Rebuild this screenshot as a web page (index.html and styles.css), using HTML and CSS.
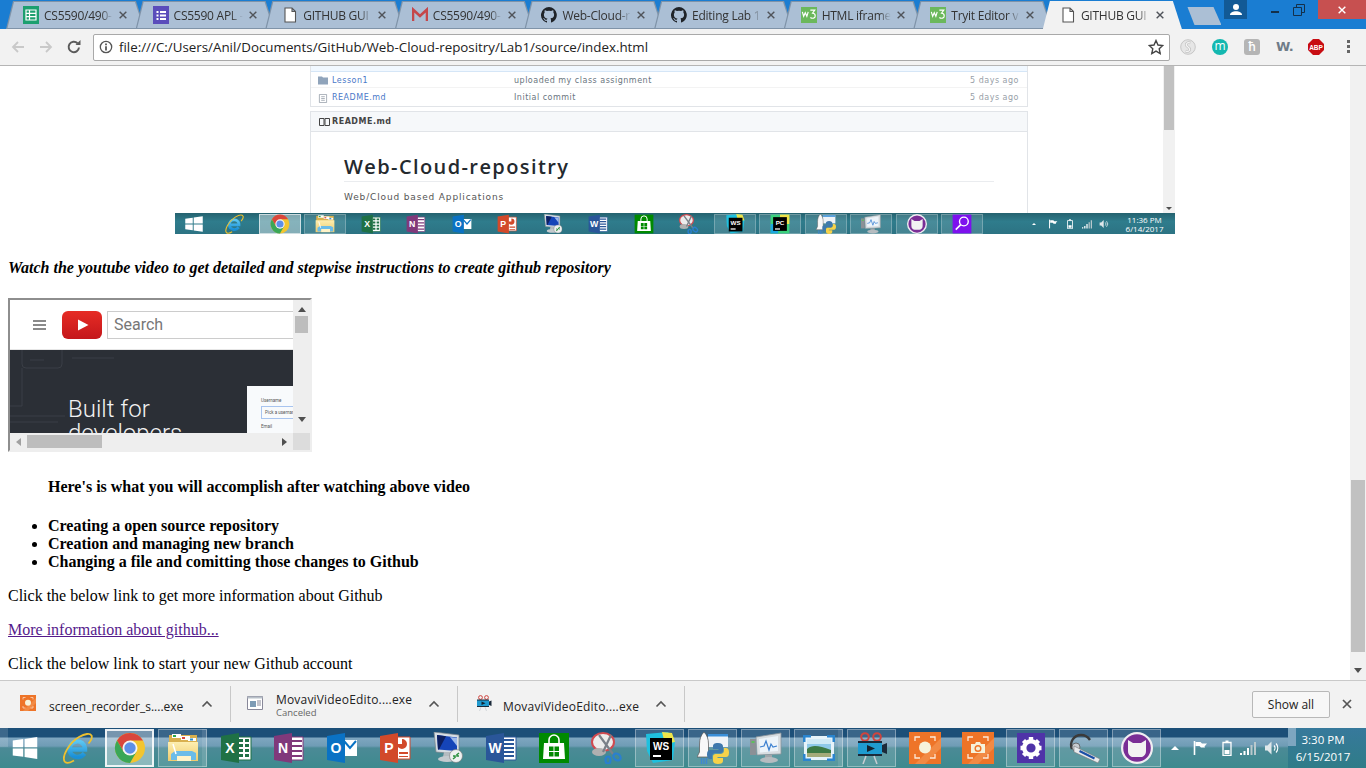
FILE: index.html
```html
<!DOCTYPE html>
<html lang="en">
<head>
<meta charset="utf-8">
<title>GITHUB GUIDE</title>
<link rel="stylesheet" href="styles.css">
</head>
<body>
<svg class="defs" width="0" height="0" aria-hidden="true">
  <defs>
    <linearGradient id="ieg" x1="0" y1="0" x2="0" y2="1"><stop offset="0" stop-color="#5cc6f2"/><stop offset="1" stop-color="#1a8fd6"/></linearGradient>
    <linearGradient id="fdg" x1="0" y1="0" x2="0" y2="1"><stop offset="0" stop-color="#fdeeb0"/><stop offset="1" stop-color="#efcb6c"/></linearGradient>
    <symbol id="x" viewBox="0 0 12 12"><path d="M2 2l8 8M10 2l-8 8" stroke="currentColor" stroke-width="1.700" fill="none"/></symbol>
    <symbol id="doc" viewBox="0 0 16 16"><path d="M3 1h7l3.500 3.500V15H3z M10 1v3.500h3.500" fill="#fff" stroke="currentColor" stroke-width="1.100"/></symbol>
    <symbol id="sheets" viewBox="0 0 16 20"><path d="M0 1h16v18H0z" fill="#1c9f6f"/><path d="M3 5h10v10H3zM3 8.300h10M3 11.600h10M6.500 5v10" fill="none" stroke="#fff" stroke-width="1.200"/></symbol>
    <symbol id="forms" viewBox="0 0 16 20"><path d="M0 1h16v18H0z" fill="#5a4dbb"/><path d="M3.500 6h2v2h-2zM3.500 9.500h2v2h-2zM3.500 13h2v2h-2zM7 6h6v2H7zM7 9.500h6v2H7zM7 13h6v2H7z" fill="#fff"/></symbol>
    <symbol id="gmail" viewBox="0 0 16 16"><path d="M1 14V2.500L8 9l7-6.500V14" fill="none" stroke="#c5474b" stroke-width="2.600"/></symbol>
    <symbol id="gh" viewBox="0 0 16 16"><path d="M8 0a8 8 0 0 0-2.500 15.600c.4.100.5-.2.500-.4v-1.400c-2.200.5-2.700-1-2.700-1-.4-.9-.9-1.200-.9-1.200-.7-.5.100-.5.100-.5.800.100 1.200.8 1.200.8.700 1.200 1.900.9 2.300.7.100-.5.300-.9.500-1.100-1.800-.2-3.600-.9-3.600-4 0-.9.300-1.600.8-2.100-.1-.2-.4-1 .1-2.100 0 0 .7-.2 2.200.8a7.600 7.600 0 0 1 4 0c1.500-1 2.200-.8 2.200-.8.500 1.100.2 1.900.1 2.100.5.600.8 1.300.8 2.100 0 3.100-1.900 3.700-3.700 3.900.3.300.6.700.6 1.500v2.200c0 .2.100.5.600.4A8 8 0 0 0 8 0z" fill="#1f2328"/></symbol>
    <symbol id="w3" viewBox="0 0 18 18"><path d="M0 0h18v18H0z" fill="#6bb85c"/><path d="M1.500 5.500l1.500 5 1.800-4 1.800 4 1.500-5M10.500 3.500h5l-2.500 3.500c2.200 0 3 1.200 3 3 0 2.500-3 3.500-5.500 1.800" fill="none" stroke="#fff" stroke-width="1.300"/></symbol>

    <symbol id="t-win" viewBox="0 0 32 32"><path d="M2 7.500l12-1.700v9.400H2zM15.500 5.600L30 3.500v11.700H15.500zM2 16.700h12v9.400L2 24.500zM15.500 16.700H30v11.800l-14.500-2.200z" fill="#fff"/></symbol>
    <symbol id="t-ie" viewBox="0 0 32 32"><path d="M24 17.500H8.500a7.800 7.800 0 0 1 15.500-1.500zM8.500 17.500c.5 7.500 10 10 15 4" fill="none" stroke="url(#ieg)" stroke-width="4.400"/><path d="M4 30C0 25 8 11 18 5c6-3.500 11-4 12.500-1.500 1 2-.5 5-3 8M4 30c2 1.500 5 1 9-1.500" fill="none" stroke="#eec02e" stroke-width="1.800"/></symbol>
    <symbol id="t-chrome" viewBox="0 0 32 32"><circle cx="16" cy="16" r="15" fill="#f2c52f"/><path d="M3 8.500A15 15 0 0 1 29 8.500H16L9.500 19.750z" fill="#d9463c"/><path d="M3 8.500L9.500 19.750H22.500L16 31A15 15 0 0 1 3 8.500z" fill="#3aa757"/><circle cx="16" cy="16" r="7.500" fill="#f4f4f4"/><circle cx="16" cy="16" r="5.700" fill="#5d8fe8"/></symbol>
    <symbol id="t-folder" viewBox="0 0 32 32"><path d="M2 3h28v25H2z" fill="#d9b04e"/><path d="M5 2h9v4H5z" fill="#fff"/><path d="M6 3h3v2H6z" fill="#2aa84a"/><path d="M14 4h9v4h-9z" fill="#fff"/><path d="M15 5h3v2h-3z" fill="#d9463c"/><path d="M21 6h8v3h-8z" fill="#fff"/><path d="M23 6.500h3v2h-3z" fill="#2a8fd0"/><path d="M1 10h30v19H1z" fill="url(#fdg)"/><path d="M8 19h17l4 2v7H24v-4H10v4H4v-6z" fill="#6bbce8"/><path d="M10 24h14v5H10z" fill="#fff3c8"/><path d="M6 12l3 10" stroke="#fff" stroke-width="1.500"/></symbol>
    <symbol id="t-xl" viewBox="0 0 32 32"><path d="M17 5h14v23H17z" fill="#fff" stroke="#1f7145"/><path d="M19 7h4v3h-4zM25 7h4v3h-4zM19 12h4v3h-4zM25 12h4v3h-4zM19 17h4v3h-4zM25 17h4v3h-4zM19 22h4v3h-4zM25 22h4v3h-4z" fill="#1f7145"/><path d="M1 4l18-3v30L1 28z" fill="#1f7145"/><text x="10" y="21" class="glyph">X</text></symbol>
    <symbol id="t-on" viewBox="0 0 32 32"><path d="M17 5h13v23H17z" fill="#fff" stroke="#80397b"/><path d="M19 9h10M19 14h10M19 19h10M19 24h10" stroke="#80397b" stroke-width="2"/><path d="M1 4l18-3v30L1 28z" fill="#80397b"/><text x="10" y="21" class="glyph">N</text></symbol>
    <symbol id="t-ol" viewBox="0 0 32 32"><path d="M17 8h14v16H17z" fill="#fff"/><path d="M18 9l6 7 6-7" fill="none" stroke="#0a72c4" stroke-width="2"/><path d="M1 4l18-3v30L1 28z" fill="#0a72c4"/><text x="10" y="21" class="glyph">O</text></symbol>
    <symbol id="t-pp" viewBox="0 0 32 32"><path d="M17 5h14v22H17z" fill="#fff" stroke="#d2492a"/><path d="M23 7a5 5 0 1 1-5 5h5z" fill="#d2492a"/><path d="M20 20h9v2h-9zM20 24h9v1h-9z" fill="#d2492a"/><path d="M1 4l18-3v30L1 28z" fill="#d2492a"/><text x="10" y="21" class="glyph">P</text></symbol>
    <symbol id="t-rd" viewBox="0 0 32 32"><path d="M2 0l25 3v19L4 20z" fill="#d6dde3" stroke="#7a8288" stroke-width=".7"/><path d="M5 3l20 2.500V19L6 17.500z" fill="#1544b8"/><path d="M5 3l9 1.200L7 17.500H6z" fill="#0d1f60"/><path d="M18 5l7 1v8z" fill="#9db9ea"/><path d="M12 20h8l1 5H11z" fill="#b4bbc0"/><ellipse cx="15" cy="27" rx="9" ry="3" fill="#c4cace"/><circle cx="24" cy="24" r="6.500" fill="#eef0f0" stroke="#777" stroke-width=".6"/><path d="M21 27l2.500-2M24.500 23l2.500-2M21 24h2v2M27 24h-2v-2" fill="none" stroke="#2a8f3d" stroke-width="1.500"/></symbol>
    <symbol id="t-wd" viewBox="0 0 32 32"><path d="M17 5h14v23H17z" fill="#fff" stroke="#2a5699"/><path d="M19 8h10M19 12h10M19 16h10M19 20h10M19 24h10" stroke="#2a5699" stroke-width="2"/><path d="M1 4l18-3v30L1 28z" fill="#2a5699"/><text x="10" y="21" class="glyph">W</text></symbol>
    <symbol id="t-store" viewBox="0 0 32 32"><path d="M1 1h30v30H1z" fill="#008a00"/><path d="M6 11h20l1 16H5z" fill="#fff"/><path d="M11 12V8a5 5 0 0 1 10 0v4" fill="none" stroke="#fff" stroke-width="1.600"/><path d="M11 14.500h4.500V19H11zM16.500 14.500H21V19h-4.500zM11 20h4.500v4.500H11zM16.500 20H21v4.500h-4.500z" fill="#008a00"/></symbol>
    <symbol id="t-snip" viewBox="0 0 32 32"><ellipse cx="12" cy="10" rx="11" ry="9" fill="#ececec" stroke="#d04a50" stroke-width="2"/><ellipse cx="8" cy="20" rx="7" ry="4" fill="#b0b0b0"/><path d="M8 3l14 19M20 3L12 20" stroke="#7a8088" stroke-width="2.200"/><ellipse cx="26" cy="25" rx="4" ry="3" fill="none" stroke="#2a7fd0" stroke-width="2.200" transform="rotate(40 26 25)"/><ellipse cx="17" cy="28" rx="2.500" ry="3.500" fill="none" stroke="#2a7fd0" stroke-width="2.200"/></symbol>
    <symbol id="t-ws" viewBox="0 0 32 32"><path d="M2 2l22-2 7 10-2 18-20 3-6-12z" fill="#1fc0de"/><path d="M18 0l10 1 3 9-10 2z" fill="#eee54a"/><path d="M6 6h22v22H6z" fill="#000"/><text x="17" y="18" class="jb">WS</text><path d="M9 23h8v2H9z" fill="#fff"/></symbol>
    <symbol id="t-pc" viewBox="0 0 32 32"><path d="M1 1h30v30H1z" fill="#3bd17c"/><path d="M16 1h15v15H16z" fill="#f1e24a"/><path d="M1 16h12v15H1z" fill="#1ca8e0"/><path d="M5 5h22v22H5z" fill="#000"/><text x="16" y="17" class="jb">PC</text><path d="M8 23h8v2H8z" fill="#fff"/></symbol>
    <symbol id="t-rocket" viewBox="0 0 32 32"><path d="M11 2h20v13H11z" fill="#eef3f7"/><path d="M11 2h20v2.500H11z" fill="#3a8fd8"/><path d="M7 0c3 3 4.500 7 4.500 12v8l2.500 5H0l2.500-5v-8C2.500 7 4 3 7 0z" fill="#f8f8f8" stroke="#555" stroke-width=".7"/><path d="M4.500 26v6M7 26v6M9.500 26v6" stroke="#3f86d2" stroke-width="1.400"/><path d="M21 11c-4 0-5 1.500-5 3.500V17h5.500v1H13c-2 0-3 1.500-3 4.500s1 4.500 3 4.500h2v-2.500c0-2 1.500-3.500 3.500-3.500h5c1.500 0 2.500-1 2.500-2.500v-4c0-2-1.500-3.500-5-3.500z" fill="#3f79ad"/><path d="M21 11c-4 0-5 1.500-5 3.500V17h5.500v1H13c-2 0-3 1.500-3 4.500s1 4.500 3 4.500h2v-2.500c0-2 1.500-3.500 3.500-3.500h5c1.500 0 2.500-1 2.500-2.500v-4c0-2-1.500-3.500-5-3.500z" fill="#f6d24a" transform="rotate(180 21 21.500)"/></symbol>
    <symbol id="t-mon" viewBox="0 0 32 32"><path d="M6 5l25-4v21L7 23z" fill="#d8dde1" stroke="#8c949a" stroke-width=".8"/><path d="M9 7l19-3v15L10 20.500z" fill="#edf4fa"/><path d="M10 15l4-1 2-5 3 9 2-6 2 3 4-1" fill="none" stroke="#3a7fd0" stroke-width="1.200"/><path d="M0 7h6v16H0z" fill="#8b9096"/><path d="M1.500 9h3v2h-3z" fill="#5cbf5c"/><path d="M15 23h7v3h-7z" fill="#a0a6ab"/><ellipse cx="19" cy="28" rx="9" ry="3" fill="#b6bcc0"/></symbol>
    <symbol id="t-photo" viewBox="0 0 32 32"><path d="M1 4h30v24H1z" fill="#e6f3fa"/><path d="M4 7h24v18H4z" fill="#8fc9ea"/><path d="M4 7h24v5H4z" fill="#cfe9f7"/><path d="M4 17c6-5 12-3 24 1v7H4z" fill="#3d7a46"/><path d="M4 21h24v4H4z" fill="#a4ab7a"/><path d="M0 3h8v2.500H2.500V10H0zM32 3h-8v2.500h5.500V10H32zM0 29h8v-2.500H2.500V22H0zM32 29h-8v-2.500h5.500V22H32z" fill="#2a85cf"/></symbol>
    <symbol id="t-movavi" viewBox="0 0 32 32"><circle cx="9" cy="5" r="3.800" fill="none" stroke="#d0443e" stroke-width="2"/><circle cx="21" cy="5" r="3.800" fill="none" stroke="#d0443e" stroke-width="2"/><path d="M2 9h24v15H2z" fill="#1b2a3a"/><path d="M2 11h24v11H2z" fill="#1f9bd0"/><path d="M11 13l8 3.500-8 3.500z" fill="#14222f"/><path d="M26 13l5-2v11l-5-2z" fill="#1b2a3a"/><path d="M10 24L7 32M18 24l3 8" stroke="#c8cdd2" stroke-width="1.500"/></symbol>
    <symbol id="t-rec" viewBox="0 0 32 32"><path d="M0 0h32v32H0z" fill="#ee7428"/><path d="M32 6L6 32h10L32 16z" fill="#f28a44"/><circle cx="16" cy="15.500" r="6" fill="#f6f2da"/><path d="M6 9V5h5M26 9V5h-5M6 22v4h5M26 22v4h-5" fill="none" stroke="#fde9d8" stroke-width="1.300"/></symbol>
    <symbol id="t-cam" viewBox="0 0 32 32"><path d="M0 0h32v32H0z" fill="#ee7428"/><path d="M32 6L6 32h10L32 16z" fill="#f28a44"/><path d="M9 12h4l1-2h4l1 2h4v9H9z" fill="#f6f2da"/><circle cx="16" cy="16.500" r="2.800" fill="none" stroke="#ee7428" stroke-width="1.400"/><path d="M6 9V5h5M26 9V5h-5M6 22v4h5M26 22v4h-5" fill="none" stroke="#fde9d8" stroke-width="1.300"/></symbol>
    <symbol id="t-gear" viewBox="0 0 32 32"><path d="M2 1h28v30H2z" fill="#4f33a8"/><circle cx="16" cy="16" r="6.800" fill="none" stroke="#fff" stroke-width="4.400"/><path d="M16 5v4M16 23v4M5.500 16h4M22.500 16h4M8.500 8.500l3 3M20.500 20.500l3 3M23.500 8.500l-3 3M11.500 20.500l-3 3" stroke="#fff" stroke-width="4.400"/></symbol>
    <symbol id="t-head" viewBox="0 0 32 32"><path d="M4 17C1 10 6 3 13 3c4 0 7 2 9 5" fill="none" stroke="#3a3a3a" stroke-width="2.400"/><circle cx="8" cy="15" r="4" fill="#c8ccd0" stroke="#555" stroke-width=".8"/><path d="M6 14l26 13-2 4L6 20z" fill="#e8eaec" stroke="#777" stroke-width=".6"/><path d="M12 18l15 7.500-1 2-15-7.500z" fill="#1a4ea6"/></symbol>
    <symbol id="t-cat" viewBox="0 0 32 32"><circle cx="16" cy="16" r="16" fill="#f0eef2"/><circle cx="16" cy="16" r="13.800" fill="#7a2e96"/><path d="M7 8l5 3h8l5-3v11c0 4-3 6-5 6h-8c-2 0-5-2-5-6z" fill="#f2f2f2"/></symbol>
    <symbol id="t-mag" viewBox="0 0 32 32"><path d="M1 1h30v30H1z" fill="#7d10ee"/><circle cx="19" cy="12" r="7" fill="none" stroke="#fff" stroke-width="2.200"/><path d="M14 17l-8 8" stroke="#fff" stroke-width="2.600"/></symbol>

    <symbol id="tr-flag" viewBox="0 0 16 16"><path d="M2.500 1v14" stroke="#fff" stroke-width="1.600"/><path d="M3.500 2h5l1.500 1.500h5l-2.500 3 .5 1H9L7.500 6H3.500z" fill="#fff"/></symbol>
    <symbol id="tr-batt" viewBox="0 0 16 16"><path d="M4 2.500h8v13H4z" fill="none" stroke="#fff" stroke-width="1.300"/><path d="M6.500 .5h3v2h-3zM5.500 10h5v4h-5z" fill="#fff"/></symbol>
    <symbol id="tr-sig" viewBox="0 0 16 16"><path d="M0 13h2v2H0zM3.500 11h2v4h-2zM7 8h2v7H7z" fill="#fff"/><path d="M10.500 5h2v10h-2zM14 2h2v13h-2z" fill="#b9c8cc"/></symbol>
    <symbol id="tr-vol" viewBox="0 0 16 16"><path d="M1 5.500h2.500L7.500 1.500v13L3.500 10.500H1z" fill="#dfe7ea"/><path d="M10 5.500a3.500 3.500 0 0 1 0 5M12 3.500a6.500 6.500 0 0 1 0 9" fill="none" stroke="#fff" stroke-width="1.100"/></symbol>
  </defs>
</svg>

<div class="browser">
  <header class="tabbar">
    <div class="tabs">
      <div class="tab"><svg class="tab-ico tab-ico-tall"><use href="#sheets"/></svg><span class="tab-title">CS5590/490-</span><svg class="tab-x"><use href="#x"/></svg></div>
      <div class="tab"><svg class="tab-ico tab-ico-tall"><use href="#forms"/></svg><span class="tab-title">CS5590 APL -</span><svg class="tab-x"><use href="#x"/></svg></div>
      <div class="tab"><svg class="tab-ico tab-ico-doc"><use href="#doc"/></svg><span class="tab-title">GITHUB GUI</span><svg class="tab-x"><use href="#x"/></svg></div>
      <div class="tab"><svg class="tab-ico"><use href="#gmail"/></svg><span class="tab-title">CS5590/490-</span><svg class="tab-x"><use href="#x"/></svg></div>
      <div class="tab"><svg class="tab-ico"><use href="#gh"/></svg><span class="tab-title">Web-Cloud-r</span><svg class="tab-x"><use href="#x"/></svg></div>
      <div class="tab"><svg class="tab-ico"><use href="#gh"/></svg><span class="tab-title">Editing Lab 1</span><svg class="tab-x"><use href="#x"/></svg></div>
      <div class="tab"><svg class="tab-ico"><use href="#w3"/></svg><span class="tab-title">HTML iframe</span><svg class="tab-x"><use href="#x"/></svg></div>
      <div class="tab"><svg class="tab-ico"><use href="#w3"/></svg><span class="tab-title">Tryit Editor v</span><svg class="tab-x"><use href="#x"/></svg></div>
      <div class="tab tab-active"><svg class="tab-ico tab-ico-doc"><use href="#doc"/></svg><span class="tab-title">GITHUB GUI</span><svg class="tab-x"><use href="#x"/></svg></div>
      <div class="newtab"></div>
    </div>
    <div class="winctl">
      <div class="win-user"><svg viewBox="0 0 14 14" width="14" height="14"><circle cx="7" cy="4" r="3" fill="#fff"/><path d="M1 12c0-5 12-5 12 0z" fill="#fff"/></svg></div>
      <div class="win-min"><span class="min-bar"></span></div>
      <div class="win-max"><svg viewBox="0 0 12 12" width="12" height="12"><path d="M3.500 3V.5h8v8H9M.5 3.500h8v8h-8z" fill="none" stroke="#14304a"/></svg></div>
      <div class="win-close"><svg width="10" height="10"><use href="#x"/></svg></div>
    </div>
  </header>

  <nav class="toolbar">
    <div class="navbtns">
      <svg class="nav-ico nav-off" viewBox="0 0 16 16"><path d="M14 8H3M8 3L3 8l5 5" fill="none" stroke="currentColor" stroke-width="1.800"/></svg>
      <svg class="nav-ico nav-off" viewBox="0 0 16 16"><path d="M2 8h11M8 3l5 5-5 5" fill="none" stroke="currentColor" stroke-width="1.800"/></svg>
      <svg class="nav-ico" viewBox="0 0 16 16"><path d="M13 8.500A5.200 5.200 0 1 1 11.500 4.300" fill="none" stroke="currentColor" stroke-width="2"/><path d="M9.500 6h5V1z" fill="currentColor"/></svg>
    </div>
    <div class="omnibox">
      <svg class="info" viewBox="0 0 16 16"><circle cx="8" cy="8" r="6.500" fill="none" stroke="#555" stroke-width="1.500"/><path d="M7 7h2v5H7zM7 4h2v2H7z" fill="#555"/></svg>
      <span class="url">file:///C:/Users/Anil/Documents/GitHub/Web-Cloud-repositry/Lab1/source/index.html</span>
      <svg class="star" viewBox="0 0 16 16"><path d="M8 1.500l2 4.500 4.800.5-3.600 3.200 1 4.800L8 12.100l-4.200 2.400 1-4.800L1.200 6.500 6 6z" fill="none" stroke="#444" stroke-width="1.400"/></svg>
    </div>
    <div class="exts">
      <svg class="ext" viewBox="0 0 16 16"><circle cx="8" cy="8" r="7.300" fill="#e6e6e6" stroke="#c6c6c6"/><path d="M10.500 4C7 2.500 4.500 5.500 8 8s1 5.500-2.500 4" fill="none" stroke="#c2c2c2" stroke-width="2.600"/><path d="M10.500 4C7 2.500 4.500 5.500 8 8s1 5.500-2.500 4" fill="none" stroke="#f4f4f4" stroke-width="1.200"/></svg>
      <span class="ext ext-m">m</span>
      <span class="ext ext-h">ħ</span>
      <span class="ext ext-w">W.</span>
      <svg class="ext" viewBox="0 0 16 16"><path d="M5 0h6l5 5v6l-5 5H5l-5-5V5z" fill="#c80d12"/><text x="8" y="10.500" class="abp">ABP</text></svg>
      <span class="ext ext-menu"><i></i><i></i><i></i></span>
    </div>
  </nav>

  <main class="viewport">
    <div class="page">
      <figure class="shot">
        <div class="shot-view">
          <div class="shot-page">
            <div class="repo-files">
              <div class="repo-band"></div>
              <div class="repo-row">
                <svg class="repo-ico" viewBox="0 0 10 8"><path d="M0 0h4l1 1h5v7H0z" fill="#90a4bb"/></svg>
                <span class="repo-name">Lesson1</span><span class="repo-msg">uploaded my class assignment</span><span class="repo-age">5 days ago</span>
              </div>
              <div class="repo-row repo-row-last">
                <svg class="repo-ico" viewBox="0 0 10 10"><path d="M1 .5h8v9H1zM3 3h4M3 5h4M3 7h4" fill="none" stroke="#8b95a0" stroke-width=".8"/></svg>
                <span class="repo-name">README.md</span><span class="repo-msg">Initial commit</span><span class="repo-age">5 days ago</span>
              </div>
            </div>
            <div class="readme">
              <div class="readme-head">
                <svg class="readme-ico" viewBox="0 0 11 8"><path d="M.5.500h4.500v7H.5zM6 .500h4.500v7H6z" fill="none" stroke="#444"/></svg>
                <strong>README.md</strong>
              </div>
              <div class="readme-body">
                <h1 class="readme-title">Web-Cloud-repositry</h1>
                <p class="readme-text">Web/Cloud based Applications</p>
              </div>
            </div>
          </div>
          <div class="shot-scroll"><span class="shot-thumb"></span><span class="shot-down"></span></div>
        </div>
        <div class="mini-task">
          <div class="mt-start"><svg class="mt-ico"><use href="#t-win"/></svg></div>
          <div class="mt-item"><svg class="mt-ico"><use href="#t-ie"/></svg></div>
          <div class="mt-item mt-on"><svg class="mt-ico"><use href="#t-chrome"/></svg></div>
          <div class="mt-item mt-box"><svg class="mt-ico"><use href="#t-folder"/></svg></div>
          <div class="mt-item"><svg class="mt-ico"><use href="#t-xl"/></svg></div>
          <div class="mt-item"><svg class="mt-ico"><use href="#t-on"/></svg></div>
          <div class="mt-item"><svg class="mt-ico"><use href="#t-ol"/></svg></div>
          <div class="mt-item"><svg class="mt-ico"><use href="#t-pp"/></svg></div>
          <div class="mt-item"><svg class="mt-ico"><use href="#t-rd"/></svg></div>
          <div class="mt-item"><svg class="mt-ico"><use href="#t-wd"/></svg></div>
          <div class="mt-item"><svg class="mt-ico"><use href="#t-store"/></svg></div>
          <div class="mt-item"><svg class="mt-ico"><use href="#t-snip"/></svg></div>
          <div class="mt-item mt-box"><svg class="mt-ico"><use href="#t-ws"/></svg></div>
          <div class="mt-item mt-box"><svg class="mt-ico"><use href="#t-pc"/></svg></div>
          <div class="mt-item mt-box"><svg class="mt-ico"><use href="#t-rocket"/></svg></div>
          <div class="mt-item mt-box"><svg class="mt-ico"><use href="#t-mon"/></svg></div>
          <div class="mt-item mt-box"><svg class="mt-ico"><use href="#t-cat"/></svg></div>
          <div class="mt-item mt-box"><svg class="mt-ico"><use href="#t-mag"/></svg></div>
          <div class="mt-tray">
            <span class="tray-up tray-up-s"></span>
            <svg class="mt-tr"><use href="#tr-flag"/></svg>
            <svg class="mt-tr"><use href="#tr-batt"/></svg>
            <svg class="mt-tr"><use href="#tr-sig"/></svg>
            <svg class="mt-tr"><use href="#tr-vol"/></svg>
            <div class="mt-clock"><span>11:36 PM</span><span>6/14/2017</span></div>
          </div>
        </div>
      </figure>

      <p class="lead"><b><i>Watch the youtube video to get detailed and stepwise instructions to create github repository</i></b></p>

      <div class="frame">
        <div class="frame-main">
          <div class="yt-head">
            <span class="yt-burger"><i></i><i></i><i></i></span>
            <svg class="yt-logo" viewBox="0 0 40 28"><defs><linearGradient id="ytg" x1="0" y1="0" x2="0" y2="1"><stop offset="0" stop-color="#e62c25"/><stop offset="1" stop-color="#c4171b"/></linearGradient></defs><rect width="40" height="28" rx="6" fill="url(#ytg)"/><path d="M16 8.500l10.500 5.500L16 19.500z" fill="#fff"/></svg>
            <span class="yt-search">Search</span>
          </div>
          <div class="yt-hero">
            <svg class="yt-lines" viewBox="0 0 140 80"><path d="M12 0v14a4 4 0 0 0 4 4h32a4 4 0 0 0 4-4V0M12 18v38H0M20 10h14M62 8h42M0 66h55M0 72h48" fill="none" stroke="#3a3e46" stroke-width="1"/></svg>
            <div class="yt-copy">Built for<br>developers</div>
            <div class="yt-card">
              <span class="yt-label">Username</span>
              <span class="yt-input">Pick a username</span>
              <span class="yt-label">Email</span>
            </div>
          </div>
        </div>
        <div class="vbar"><span class="arr arr-up"></span><span class="vthumb"></span><span class="arr arr-down"></span></div>
        <div class="hbar"><span class="arr arr-left"></span><span class="hthumb"></span><span class="arr arr-right"></span></div>
        <div class="corner"></div>
      </div>

      <p class="accomplish"><b>Here's is what you will accomplish after watching above video</b></p>
      <ul class="list">
        <li>Creating a open source repository</li>
        <li>Creation and managing new branch</li>
        <li>Changing a file and comitting those changes to Github</li>
      </ul>
      <p class="para">Click the below link to get more information about Github</p>
      <p class="para"><a class="visited" href="#">More information about github...</a></p>
      <p class="para">Click the below link to start your new Github account</p>
    </div>
    <div class="pagebar">
      <span class="pb-track"><span class="pb-thumb"></span></span>
      <span class="arr arr-down pb-down"></span>
    </div>
  </main>

  <section class="downloads">
    <div class="dl dl-1">
      <svg class="dl-ico"><use href="#t-rec"/></svg>
      <div class="dl-text"><span>screen_recorder_s....exe</span></div>
      <svg class="chev" viewBox="0 0 12 8"><path d="M1.500 6.500L6 2l4.500 4.500" fill="none" stroke="#555" stroke-width="1.600"/></svg>
    </div>
    <div class="dl dl-2">
      <svg class="dl-ico" viewBox="0 0 16 16"><path d="M.5 1.500h15v13H.5z" fill="#fff" stroke="#889"/><path d="M.5 1.500h15v2H.5z" fill="#b8c0c8"/><path d="M3 6h6v6H3z" fill="#7d9bb5"/><path d="M10 6h4M10 8h4M10 10h4" stroke="#889"/></svg>
      <div class="dl-text"><span class="dl-wide">MovaviVideoEdito....exe</span><small>Canceled</small></div>
      <svg class="chev" viewBox="0 0 12 8"><path d="M1.500 6.500L6 2l4.500 4.500" fill="none" stroke="#555" stroke-width="1.600"/></svg>
    </div>
    <div class="dl dl-3">
      <svg class="dl-ico"><use href="#t-movavi"/></svg>
      <div class="dl-text"><span class="dl-wide">MovaviVideoEdito....exe</span></div>
      <svg class="chev" viewBox="0 0 12 8"><path d="M1.500 6.500L6 2l4.500 4.500" fill="none" stroke="#555" stroke-width="1.600"/></svg>
    </div>
    <div class="dl-end">
      <span class="showall">Show all</span>
      <svg class="dl-close"><use href="#x"/></svg>
    </div>
  </section>

  <footer class="taskbar">
    <div class="tb-start"><svg class="tb-ico tb-ico-win"><use href="#t-win"/></svg></div>
    <div class="tb-item"><svg class="tb-ico"><use href="#t-ie"/></svg></div>
    <div class="tb-item tb-on"><svg class="tb-ico"><use href="#t-chrome"/></svg></div>
    <div class="tb-item tb-box tb-stack"><svg class="tb-ico"><use href="#t-folder"/></svg></div>
    <div class="tb-item"><svg class="tb-ico"><use href="#t-xl"/></svg></div>
    <div class="tb-item"><svg class="tb-ico"><use href="#t-on"/></svg></div>
    <div class="tb-item"><svg class="tb-ico"><use href="#t-ol"/></svg></div>
    <div class="tb-item"><svg class="tb-ico"><use href="#t-pp"/></svg></div>
    <div class="tb-item"><svg class="tb-ico"><use href="#t-rd"/></svg></div>
    <div class="tb-item"><svg class="tb-ico"><use href="#t-wd"/></svg></div>
    <div class="tb-item"><svg class="tb-ico"><use href="#t-store"/></svg></div>
    <div class="tb-item"><svg class="tb-ico"><use href="#t-snip"/></svg></div>
    <div class="tb-item tb-box"><svg class="tb-ico"><use href="#t-ws"/></svg></div>
    <div class="tb-item tb-box"><svg class="tb-ico"><use href="#t-rocket"/></svg></div>
    <div class="tb-item tb-box"><svg class="tb-ico"><use href="#t-mon"/></svg></div>
    <div class="tb-item tb-box tb-stack"><svg class="tb-ico"><use href="#t-photo"/></svg></div>
    <div class="tb-item tb-box"><svg class="tb-ico"><use href="#t-movavi"/></svg></div>
    <div class="tb-item"><svg class="tb-ico"><use href="#t-rec"/></svg></div>
    <div class="tb-item"><svg class="tb-ico"><use href="#t-cam"/></svg></div>
    <div class="tb-item tb-box"><svg class="tb-ico"><use href="#t-gear"/></svg></div>
    <div class="tb-item tb-box"><svg class="tb-ico"><use href="#t-head"/></svg></div>
    <div class="tb-item tb-box"><svg class="tb-ico"><use href="#t-cat"/></svg></div>
    <div class="tray">
      <span class="tray-up"></span>
      <svg class="tr"><use href="#tr-flag"/></svg>
      <svg class="tr tr-batt"><use href="#tr-batt"/></svg>
      <svg class="tr tr-sig"><use href="#tr-sig"/></svg>
      <svg class="tr"><use href="#tr-vol"/></svg>
    </div>
    <div class="clock"><span>3:30 PM</span><span>6/15/2017</span></div>
  </footer>
</div>
</body>
</html>
```
FILE: styles.css
```css
* { box-sizing: border-box; }
html, body { margin: 0; height: 100%; overflow: hidden; }
p { margin: 0; }
body { font-family: "Open Sans", "Noto Sans", sans-serif; background: #fff; }
.defs { position: absolute; }
.glyph { font: bold 14px "Liberation Sans", sans-serif; fill: #fff; text-anchor: middle; }
.jb { font: bold 10px "Liberation Sans", sans-serif; fill: #fff; text-anchor: middle; }
.abp { font: bold 6.500px "Liberation Sans", sans-serif; fill: #fff; text-anchor: middle; }

.browser { width: 1366px; height: 768px; display: flex; flex-direction: column; overflow: hidden; }

/* tab strip */
.tabbar { height: 29px; flex: none; background: #1a7dd2; display: flex; justify-content: space-between; }
.tabs { display: flex; padding: 1px 0 0 6px; }
.tab { width: 139px; height: 28px; margin-right: -9.400px; display: flex; align-items: center; padding: 0 17px; background: #7f93a8;
  clip-path: polygon(0 100%, 7px 0, 130px 0, 139px 100%); position: relative; color: #444; }
.tab::before { content: ""; position: absolute; inset: 0; background: #abbfd5; clip-path: polygon(1.500px calc(100% - 1px), 8px 1px, 129px 1px, 137.500px calc(100% - 1px)); }
.tab > * { position: relative; }
.tab-active { background: #f2f2f2; }
.tab-active::before { background: #f2f2f2; }
.tab-ico { width: 16px; height: 16px; flex: none; color: #555; }
.tab-ico-tall { height: 20px; }
.tab-ico-doc { height: 18px; }
.tab-title { width: 73px; margin-left: 5px; font-size: 12px; letter-spacing: -.25px; color: #333; white-space: nowrap; overflow: hidden;
  -webkit-mask-image: linear-gradient(90deg, #000 80%, transparent 97%); mask-image: linear-gradient(90deg, #000 80%, transparent 97%); }
.tab-x { width: 10px; height: 10px; flex: none; margin-left: 3px; color: #50545a; }
.newtab { width: 34px; height: 18px; margin: 6px 0 0 15px; background: #abbfd5;
  clip-path: polygon(0 0, 26px 0, 34px 100%, 7px 100%); }
.winctl { display: flex; align-items: flex-start; }
.win-user { width: 23px; height: 19px; background: #125a96; display: flex; align-items: center; justify-content: center; margin-right: 14px; }
.win-min { width: 28px; height: 19px; display: flex; align-items: center; justify-content: center; }
.min-bar { width: 8px; height: 2px; margin-top: 5px; background: #14304a; }
.win-max { width: 18px; height: 19px; display: flex; align-items: center; justify-content: center; margin-right: 10px; margin-left: 1px; }
.win-close { width: 48px; height: 19px; background: #c75050; color: #fff; display: flex; align-items: center; justify-content: center; }

/* toolbar */
.toolbar { height: 37px; flex: none; background: #f2f2f2; border-bottom: 1px solid #b5b5b5; display: flex; align-items: center; }
.navbtns { width: 93px; flex: none; display: flex; padding-left: 10px; gap: 12px; }
.nav-ico { width: 16px; height: 16px; color: #5a5a5a; }
.nav-off { color: #c9c9c9; }
.omnibox { width: 1077px; height: 27px; background: #fff; border: 1px solid #a9a9a9; border-radius: 2px; display: flex; align-items: center; padding: 0 5px; }
.info { width: 14px; height: 14px; flex: none; }
.url { margin-left: 6px; flex: 1; font-size: 13.350px; color: #222; white-space: nowrap; }
.star { width: 16px; height: 16px; flex: none; }
.exts { flex: 1; display: flex; align-items: center; padding-left: 10px; gap: 16px; }
.ext { width: 16px; height: 16px; flex: none; }
.ext-m { border-radius: 50%; background: #14b8b0; color: #fff; font-size: 12px; line-height: 14px; text-align: center; }
.ext-h { background: #b5b5b5; border-radius: 3px; color: #fff; font-size: 12px; font-weight: 600; line-height: 16px; text-align: center; }
.ext-w { color: #6f7c88; font: bold 13px/16px "DejaVu Sans", sans-serif; letter-spacing: -.5px; white-space: nowrap; }
.ext-menu { display: flex; flex-direction: column; align-items: center; gap: 2px; padding-top: 1px; }
.ext-menu i { width: 3px; height: 3px; background: #666; }

/* page */
.viewport { flex: 1; min-height: 0; display: flex; overflow: hidden; background: #fff; }
.page { flex: 1; min-width: 0; padding-left: 8px; overflow: hidden; font: 16px/18px "Liberation Serif", "Times New Roman", serif; color: #000; }
.pagebar { width: 16px; flex: none; background: #f1f1f1; display: flex; flex-direction: column; align-items: center; }
.pb-track { flex: 1; width: 100%; display: flex; flex-direction: column; padding: 414px 1px 0; }
.pb-thumb { height: 172px; width: 100%; background: #c1c1c1; display: block; }
.pb-down { margin: 0 0 7px; }

.arr { display: block; width: 0; height: 0; flex: none; border: 4px solid transparent; }
.arr-up { border-top: 0; border-bottom: 5px solid #505050; }
.arr-down { border-bottom: 0; border-top: 5px solid #505050; }
.arr-left { border-left: 0; border-right: 5px solid #a0a0a0; }
.arr-right { border-right: 0; border-left: 5px solid #505050; }

/* nested screenshot */
.shot { margin: 0 0 0 167px; width: 1000px; height: 168px; display: flex; flex-direction: column; }
.shot-view { height: 147px; display: flex; background: #fff; }
.shot-page { flex: 1; padding-left: 135px; overflow: hidden; font-family: "DejaVu Sans", sans-serif; letter-spacing: .5px; }
.repo-files { width: 718px; border: solid #e1e4e8; border-width: 0 1px 1px; }
.repo-band { height: 6px; background: #f1f8ff; border-bottom: 1px solid #d5e6f7; }
.repo-row { height: 16px; display: flex; align-items: center; padding: 2px 8px 0 7px; font-size: 8px; line-height: 10px; border-bottom: 1px solid #f3f3f3; }
.repo-row-last { height: 18px; border-bottom: 0; }
.repo-ico { width: 10px; height: 9px; flex: none; }
.repo-name { width: 182px; margin-left: 4px; color: #4a78c8; }
.repo-msg { flex: 1; color: #6a7580; }
.repo-age { color: #98a0a8; }
.readme { width: 718px; height: 120px; margin-top: 4px; border: solid #e1e4e8; border-width: 1px 1px 0; }
.readme-head { height: 20px; background: #f6f8fa; border-bottom: 1px solid #e1e4e8; display: flex; align-items: center; padding-left: 8px; font-size: 8px; color: #444; }
.readme-ico { width: 11px; height: 8px; margin-right: 2px; }
.readme-body { padding: 23px 33px 0; }
.readme-title { margin: 0; height: 27px; font: 600 20px/24px "Open Sans", sans-serif; letter-spacing: 1.400px; color: #24292e; border-bottom: 1px solid #eaecef; white-space: nowrap; }
.readme-text { font-size: 9px; line-height: 14px; letter-spacing: .85px; color: #555; margin-top: 8px; }
.shot-scroll { width: 12px; flex: none; background: #f1f1f1; display: flex; flex-direction: column; align-items: center; justify-content: space-between; padding-bottom: 3px; }
.shot-thumb { width: 10px; height: 64px; background: #c1c1c1; display: block; }
.shot-down { width: 0; height: 0; border: 3px solid transparent; border-bottom: 0; border-top: 3px solid #505050; }

.mini-task { height: 21px; background: linear-gradient(180deg, #25626f, #2f7c8c 40%, #2c7383); display: flex; align-items: center; gap: 3.500px; }
.mt-start { width: 34.500px; height: 21px; display: flex; align-items: center; justify-content: flex-end; padding-right: 6px; }
.mt-item { width: 42px; height: 20px; display: flex; align-items: center; justify-content: center; }
.mt-box { background: rgba(255,255,255,.12); box-shadow: inset 0 0 0 1px rgba(255,255,255,.25); }
.mt-on { background: rgba(255,255,255,.42); box-shadow: inset 0 0 0 1px rgba(255,255,255,.6); }
.mt-ico { width: 20px; height: 20px; }
.mt-tray { flex: 1; display: flex; align-items: center; justify-content: flex-end; gap: 7px; color: #fff; padding-right: 12px; }
.tray-up { width: 0; height: 0; border: 4px solid transparent; border-top: 0; border-bottom: 4px solid #fff; }
.tray-up-s { border-width: 0 2px 2px; margin-right: 3px; }
.mt-tr { width: 10px; height: 10px; }
.mt-clock { display: flex; flex-direction: column; align-items: center; width: 37px; margin-left: 10px; font: 8px/9px "Open Sans", sans-serif; white-space: nowrap; }

.lead { margin: 25px 0 21px; }
.frame { width: 304px; height: 154px; border: 2px solid; border-color: #8e8e8e #eee #eee #8e8e8e; display: grid; grid-template-columns: 283px 17px; grid-template-rows: 133px 17px; background: #eee; }
.frame-main { overflow: hidden; background: #fff; }
.yt-head { height: 50px; display: flex; align-items: center; border-bottom: 1px solid #e6e6e6; padding-left: 23px; }
.yt-burger { width: 13px; margin-right: 16px; display: flex; flex-direction: column; gap: 2px; }
.yt-burger i { height: 2px; background: #8a8a8a; display: block; }
.yt-logo { width: 40px; height: 28px; flex: none; }
.yt-search { flex: 1; height: 28px; margin-left: 5px; border: 1px solid #ccc; border-right: 0; padding-left: 6px; font: 16px/26px Roboto, sans-serif; color: #777; }
.yt-hero { height: 83px; background: #2b2f36; display: flex; justify-content: space-between; position: relative; overflow: hidden; }
.yt-lines { position: absolute; left: 0; top: 0; width: 140px; height: 80px; }
.yt-copy { position: relative; margin: 47px 0 0 58px; font: 300 24px/24px Roboto, sans-serif; color: #f2f2f2; white-space: nowrap; }
.yt-card { width: 46px; margin-top: 36px; background: #f8fafc; padding: 12px 0 0 14px; display: flex; flex-direction: column; font: 4.500px/6px Roboto, sans-serif; color: #555; overflow: hidden; white-space: nowrap; }
.yt-input { height: 13px; width: 40px; line-height: 11px; border: 1px solid #a8c4ef; border-right: 0; padding-left: 3px; margin: 2px 0 5px; }
.vbar { background: #eee; display: flex; flex-direction: column; align-items: center; padding-top: 7px; }
.vthumb { width: 13px; height: 17px; background: #bdbdbd; display: block; margin-top: 4px; }
.vbar .arr-down { margin-top: 84px; }
.hbar { background: #eee; display: flex; align-items: center; padding-left: 6px; }
.hthumb { width: 75px; height: 13px; background: #bdbdbd; display: block; margin-left: 6px; }
.hbar .arr-right { margin-left: 180px; }
.corner { background: #dcdcdc; }

.accomplish { margin: 26px 0 21px 40px; }
.list { margin: 0 0 16px; padding-left: 40px; font-weight: bold; }
.para { margin-bottom: 16px; }
.visited { color: #551a8b; }

/* downloads */
.downloads { height: 48px; flex: none; background: #f2f2f2; border-top: 1px solid #c9c9c9; display: flex; align-items: stretch; }
.dl { display: flex; align-items: center; border-right: 1px solid #c8c8c8; margin: 5px 0 6px; font-size: 12px; color: #222; }
.dl-1 { width: 231px; padding-left: 20px; }
.dl-2 { width: 227px; padding-left: 16px; }
.dl-3 { width: 227px; padding-left: 18px; }
.dl-ico { width: 16px; height: 18px; flex: none; margin-top: -2px; }
.dl-text { display: flex; flex-direction: column; white-space: nowrap; line-height: 13px; margin-top: 4px; }
.dl-wide { letter-spacing: .18px; }
.dl-1 .dl-text { margin-left: 13px; width: 152px; }
.dl-2 .dl-text { margin-left: 13px; width: 152px; }
.dl-3 .dl-text { margin-left: 11px; width: 152px; }
.dl-text small { font-size: 9.500px; color: #666; }
.chev { width: 12px; height: 8px; flex: none; margin-top: -1px; }
.dl-end { flex: 1; display: flex; align-items: center; justify-content: flex-end; padding: 0 13px 1px 0; }
.showall { width: 78px; height: 27px; background: #f7f7f7; border: 1px solid #b8b8b8; border-radius: 2px; font-size: 12px; line-height: 25px; text-align: center; color: #222; }
.dl-close { width: 12px; height: 12px; margin-left: 11px; color: #555; }

/* windows taskbar */
.taskbar { height: 40px; flex: none; display: flex; align-items: center; gap: 4px; color: #fff;
  background: linear-gradient(90deg, rgba(255,255,255,.14) 8px, transparent 8px) 0 0 / 100% 19px no-repeat,
    linear-gradient(180deg, #1c4f78 0, #1c4f78 9px, #7ea6c0 10px, #6f9cb5 18px, #4b8a96 20px, #3d8a8e 100%); }
.tb-start { width: 48px; height: 38px; display: flex; align-items: center; justify-content: center; padding-left: 2px; }
.tb-item { width: 49px; height: 38px; display: flex; align-items: center; justify-content: center; }
.tb-box { background: rgba(255,255,255,.13); box-shadow: inset 0 0 0 1px rgba(255,255,255,.35); }
.tb-on { background: rgba(255,255,255,.4); box-shadow: inset 0 0 0 2px rgba(255,255,255,.85); }
.tb-stack { box-shadow: inset 0 0 0 1px rgba(255,255,255,.35), inset -5px 0 0 rgba(255,255,255,.1); }
.tb-ico { width: 32px; height: 32px; }
.tb-ico-win { width: 28px; height: 28px; }
.tray { width: 119px; flex: none; display: flex; align-items: center; gap: 8px; padding-left: 6px; }
.tray-up { margin-right: 5px; }
.tr { width: 16px; height: 16px; flex: none; }
.tr-batt { margin-left: 3px; }
.tr-sig { margin-left: -3px; }
.clock { align-self: stretch; width: 78px; flex: none; display: flex; flex-direction: column; align-items: center; justify-content: center; padding-right: 8px; font-size: 11.500px; line-height: 17px; white-space: nowrap;
  background: linear-gradient(90deg, #7ea6c0 8px, transparent 8px) 0 0 / 100% 18px no-repeat, linear-gradient(180deg, #37799c, #2f7c88); }
```
